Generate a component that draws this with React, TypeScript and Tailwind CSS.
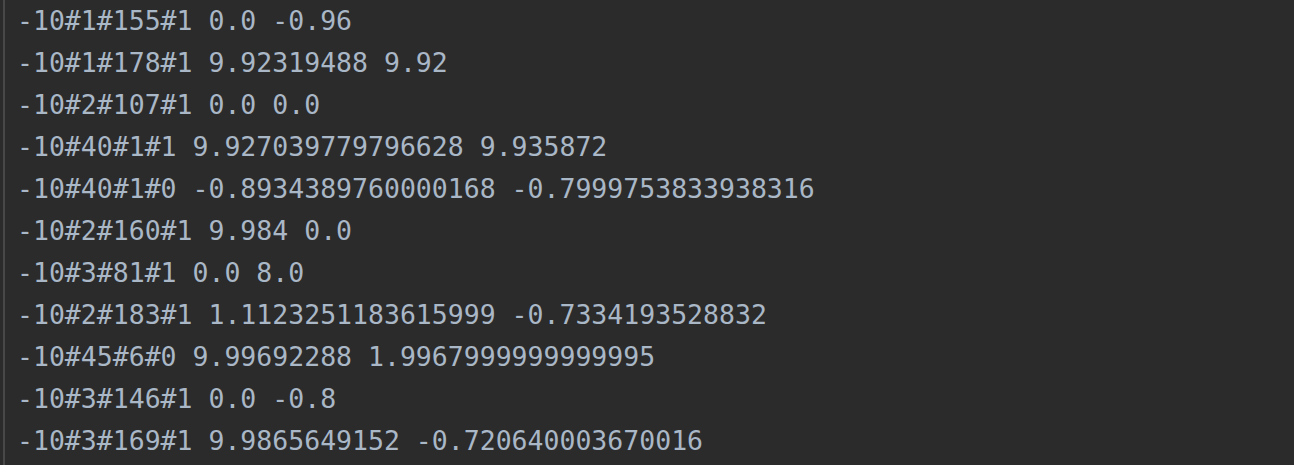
import React from "react";

const lines = [
  "-10#1#155#1 0.0 -0.96",
  "-10#1#178#1 9.92319488 9.92",
  "-10#2#107#1 0.0 0.0",
  "-10#40#1#1 9.927039779796628 9.935872",
  "-10#40#1#0 -0.8934389760000168 -0.7999753833938316",
  "-10#2#160#1 9.984 0.0",
  "-10#3#81#1 0.0 8.0",
  "-10#2#183#1 1.1123251183615999 -0.7334193528832",
  "-10#45#6#0 9.99692288 1.9967999999999995",
  "-10#3#146#1 0.0 -0.8",
  "-10#3#169#1 9.9865649152 -0.720640003670016",
];

export default function App() {
  return (
    <div className="flex w-[1294px] h-[465px] overflow-hidden bg-[#2b2b2b]">
      <div className="w-[3px] bg-[#2b2b2b]" />
      <div className="w-[2px] bg-[#484848]" />
      <div
        className="flex flex-col pl-[12px] text-[26.5px] leading-[42px] text-[#a9b7c6] whitespace-pre"
        style={{ fontFamily: '"DejaVu Sans Mono", "Liberation Mono", monospace' }}
      >
        {lines.map((l, i) => (
          <div key={i}>{l}</div>
        ))}
      </div>
    </div>
  );
}
